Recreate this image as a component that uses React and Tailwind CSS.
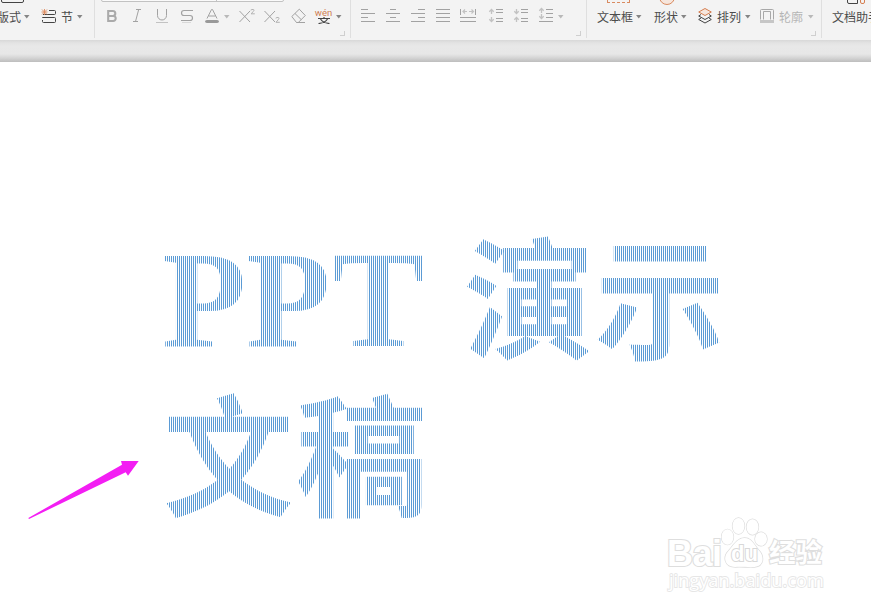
import React from 'react'

const Caret = ({ className = '', light }) => (
  <svg className={`shrink-0 ${className}`} width="6" height="17" viewBox="0 0 6 17">
    <path d="M0 7h5.500L2.750 10.400z" fill={light ? '#b9b9b9' : '#858585'} />
  </svg>
)

const Icon = ({ w, className = '', children, color = '#a2a2a2' }) => (
  <svg
    className={`shrink-0 overflow-visible ${className}`}
    width={w}
    height="17"
    viewBox={`0 0 ${w} 17`}
    fill="none"
    stroke={color}
  >
    {children}
  </svg>
)

const Label = ({ children, className = '' }) => (
  <span className={`shrink-0 whitespace-nowrap text-[12px] leading-[18px] ${className}`}>{children}</span>
)

const Launcher = () => (
  <span className="mr-[5px] mb-[4px] h-[5px] w-[5px] self-end border-r border-b border-[#cfcfcf]" />
)

const Group = ({ className, top, launcher, children }) => (
  <div className={`flex h-10 shrink-0 flex-col ${className}`}>
    <div className="flex h-2 items-start overflow-hidden">{top}</div>
    <div className="flex h-[17px] items-start">{children}</div>
    <div className="flex flex-1 flex-col justify-end">{launcher && <Launcher />}</div>
  </div>
)

const Separator = () => <div className="h-[38px] w-px shrink-0 bg-[#dfdfdf]" />

// lines of a paragraph icon: [x1, x2] for each of the four rows
const AlignIcon = ({ rows, className }) => (
  <Icon w={14} className={className}>
    {rows.map(([a, b], i) => (
      <path key={i} d={`M${a} ${1.5 + i * 4}H${b}`} />
    ))}
  </Icon>
)

const UpArrow = ({ y }) => <path d={`M2.5 ${y + 5}V${y + 0.5}M.3 ${y + 2.7}L2.5 ${y + 0.5}l2.2 2.2`} stroke="#c2c2c2" strokeWidth="1.3" />
const DownArrow = ({ y }) => <path d={`M2.5 ${y}v4.5M.3 ${y + 2.3}L2.5 ${y + 4.5}l2.2-2.2`} stroke="#c2c2c2" strokeWidth="1.3" />

const Toolbar = () => (
  <div className="flex h-10 overflow-hidden bg-[#f3f3f3] text-[#4c4c4c]">
    <Group
      className="w-[94px]"
      top={<div className="-mt-1 ml-px h-[7px] w-[23px] rounded-b-[2px] border border-[#444]" />}
    >
      <Label className="-ml-[3px]">版式</Label>
      <Caret className="ml-[3px]" />
      <Icon w={15} className="ml-[11px]" color="#444">
        <path d="M8 2.500h5.500q1 0 1 1v2q0 1-1 1H8M1.500 10v-.5h12q1 0 1 1v3q0 1-1 1h-11q-1 0-1-1V12M8 6.500H2" />
        <path d="M3.500 1v6M.5 4h6M1 1.500l5 5M6 1.500l-5 5" stroke="#dc8a5e" strokeWidth=".9" />
      </Icon>
      <Label className="ml-[5px]">节</Label>
      <Caret className="ml-[4px]" />
    </Group>
    <Separator />

    <Group
      className="w-[255px]"
      launcher
      top={
        <div className="-mt-2 ml-[6px] flex h-[10px] w-[183px] rounded-[2px] border border-[#c2c2c2] bg-[#fafafa]">
          <div className="w-[115px] border-r border-[#c2c2c2]" />
        </div>
      }
    >
      <Icon w={10} className="ml-[12px]" color="#aaa">
        <path d="M1.200 3h4.600a2.400 2.400 0 0 1 0 5H1.200zM1.200 8h5a2.500 2.500 0 0 1 0 5h-5z" strokeWidth="2.100" />
      </Icon>
      <Icon w={8} className="ml-[16px]">
        <path d="M3 1.500h5M0 13.500h5M5.700 1.500l-3.200 12" />
      </Icon>
      <Icon w={12} className="ml-[15px]">
        <path d="M1.500 1v6.500a4.500 4.500 0 0 0 9 0V1" />
        <path d="M0 14.500h12" stroke="#c2c2c2" />
      </Icon>
      <Icon w={12} className="ml-[13px]">
        <path d="M12 2.500H3q-2.500 0-2.500 2.500T3 7.500h6q2.500 0 2.500 2.500T9 12.500H0" strokeWidth="1.200" />
        <path d="M1 14.500h9" stroke="#d9d9d9" />
      </Icon>
      <Icon w={14} className="ml-[12px]">
        <path d="M2 10.500L6.500 1.500h1l4.500 9M3.500 8h7" />
        <rect x=".5" y="12.500" width="13" height="2" rx="1" fill="#999" stroke="#999" />
      </Icon>
      <Caret className="ml-[5px]" light />
      <Icon w={16} className="ml-[9px]">
        <path d="M.5 3l10.500 11M11 3L.5 14" />
        <path d="M12 2.500V2q0-.5.700-.5h1.600q.7 0 .7.800T12 5.800h3.800" stroke="#b2b2b2" />
      </Icon>
      <Icon w={16} className="ml-[9px]">
        <path d="M.5 3L11 14M11 3L.5 14" />
        <path d="M12 10.500V10q0-.5.700-.5h1.600q.7 0 .7.800t-3 4h3.800" stroke="#b2b2b2" />
      </Icon>
      <Icon w={15} className="ml-[11px]">
        <path d="M.8 8.500L8.300 1.200l6 6.300-7 7H5.500zM4 5.500l6.300 6.200M5.500 14.500H14" />
      </Icon>
      <div className="ml-[8px] flex w-[19px] shrink-0 flex-col items-center">
        <span className="mt-[-3px] h-[12px] font-['Roboto',sans-serif] text-[9.500px] leading-[15px] text-[#cf7f54]">wén</span>
        <svg width="12" height="7" viewBox="0 0 12 7" fill="none" stroke="#444">
          <path d="M0 1.500h12M6 0v1.500M2.500 2Q5 6 11.500 6.500M9.500 2Q7 6 .5 6.500" strokeWidth="1.200" />
        </svg>
      </div>
      <Caret className="ml-[3px]" />
    </Group>
    <Separator />

    <Group className="w-[235px]" launcher>
      <AlignIcon className="ml-[10px]" rows={[[0, 7], [0, 14], [0, 7], [0, 14]]} />
      <AlignIcon className="ml-[11px]" rows={[[4, 10], [0, 14], [4, 10], [0, 14]]} />
      <AlignIcon className="ml-[11px]" rows={[[7, 14], [0, 14], [7, 14], [0, 14]]} />
      <AlignIcon className="ml-[11px]" rows={[[0, 14], [0, 14], [0, 14], [0, 14]]} />
      <Icon w={16} className="ml-[10px]">
        <path d="M.5 1v6M15.500 1v6M0 9.500h16M0 13.500h16" />
        <path d="M2.500 3.500H7M5 1.500l-2 2 2 2M9 3.500h4.500M11.500 1.500l2 2-2 2" stroke="#c2c2c2" strokeWidth="1.200" />
      </Icon>
      <Icon w={14} className="ml-[13px]">
        <UpArrow y={1} />
        <DownArrow y={9} />
        <path d="M7 1.500h7M7 4.500h7M7 10.500h7M7 13.500h7" />
      </Icon>
      <Icon w={14} className="ml-[11px]">
        <DownArrow y={1} />
        <UpArrow y={9} />
        <path d="M7 1.500h7M7 4.500h7M7 10.500h7M7 13.500h7" />
      </Icon>
      <Icon w={14} className="ml-[11px]">
        <UpArrow y={0} />
        <DownArrow y={6} />
        <path d="M7 1.500h7M7 5.500h7M7 9.500h7M0 13.500h14" />
      </Icon>
      <Caret className="ml-[5px]" light />
    </Group>
    <Separator />

    <Group
      className="w-[234px]"
      launcher
      top={
        <>
          <div className="-mt-2 ml-[20px] h-[11px] w-[23px] border border-dashed border-[#d98b60]" />
          <div className="-mt-[11px] ml-[29px] h-[16px] w-[16px] shrink-0 rounded-full border border-[#d98b60] bg-[#f6e6dd]" />
        </>
      }
    >
      <Label className="ml-[10px]">文本框</Label>
      <Caret className="ml-[3px]" />
      <Label className="ml-[12px]">形状</Label>
      <Caret className="ml-[3px]" />
      <Icon w={14} className="ml-[11px]" color="#444">
        <path d="M3 10L.7 11.500 7 15l6.300-3.500L11 10M3 6.500L.7 8 7 11.500 13.300 8 11 6.500" />
        <path d="M7 .5l6.300 3.500L7 7.500.7 4z" stroke="#d57e50" fill="#f6e6dd" />
      </Icon>
      <Label className="ml-[5px]">排列</Label>
      <Caret className="ml-[4px]" />
      <Icon w={14} className="ml-[9px]" color="#a8a8a8">
        <path d="M.5 11.500v-9q0-1 1-1h11q1 0 1 1v9M3.500 11.500v-8h7v8" />
        <path d="M0 13.500h14" stroke="#c6c6c6" strokeWidth="3" />
      </Icon>
      <Label className="ml-[5px] text-[#b5b5b5]">轮廓</Label>
      <Caret className="ml-[5px]" light />
    </Group>
    <Separator />

    <Group
      className="w-[60px]"
      top={
        <>
          <div className="-mt-1 ml-[25px] h-[8px] w-[11px] rounded-bl-[2px] border border-[#444]" />
          <div className="-mt-1 ml-[2px] h-[8px] w-[5px] rounded-b-[2px] border border-[#d57e50]" />
        </>
      }
    >
      <Label className="ml-[10px]">文档助手</Label>
    </Group>
  </div>
)

const STRIPES =
  'bg-[linear-gradient(90deg,transparent_1px,#5b9bd5_1px)] bg-[length:2px_100%] bg-clip-text text-transparent'

const Slide = () => (
  <div className="relative h-[549px] overflow-hidden bg-white">
    <div
      className={`ml-[162px] w-[600px] pt-[159px] font-['Liberation_Serif',serif] text-[138px] font-bold leading-[157px] ${STRIPES}`}
    >
      <div className="h-[157px] whitespace-pre">
        P<span className="tracking-[2px]">P</span>T{' '}
        <span className="ml-[7px] align-[-3px] font-['Noto_Sans_CJK_SC',sans-serif] text-[131px] leading-[100px]">演示</span>
      </div>
      <div className="h-[157px] whitespace-pre">
        <span className="ml-[1px] align-[-3px] font-['Noto_Sans_CJK_SC',sans-serif] text-[131px] leading-[100px] tracking-[2px]">文稿</span>
      </div>
    </div>

    <svg className="absolute top-[397px] left-[27px]" width="113" height="62" viewBox="0 0 113 62">
      <path d="M1.300 59L95 5.700 94 2h17.700L101 16.700l-2.300-3.400L2 60z" fill="#f31ef3" />
    </svg>

    <div className="absolute top-[453px] left-[667px] text-white [paint-order:stroke_fill]">
      <div className="flex h-[54px] items-start font-['Liberation_Sans','Noto_Sans_CJK_SC',sans-serif] font-bold [-webkit-text-stroke:2.2px_#dedede]">
        <span className="mt-[19px] w-[54px] text-[36px] leading-[40px] tracking-[-0.5px]">Bai</span>
        <div className="relative">
          <svg width="48" height="53" viewBox="0 0 48 53" fill="#fff" stroke="#dcdcdc" strokeWidth="1.300">
            <ellipse cx="6.500" cy="22" rx="6" ry="7.700" />
            <ellipse cx="17.500" cy="11" rx="6" ry="8" />
            <ellipse cx="31.500" cy="12" rx="6" ry="7.800" />
            <ellipse cx="40" cy="24" rx="6" ry="6.800" />
            <path d="M23.500 23c7 0 9 6 14 12 6 6 6 16-4 17-5 .5-14-.5-19 0-11 0-13-10-7-16 5-6 9-13 16-13z" />
          </svg>
          <span className="absolute top-[27px] left-[10px] text-[22px] leading-[24px] [-webkit-text-stroke:2px_#d8d8d8]">
            du
          </span>
        </div>
        <span className="mt-[21px] text-[26.500px] leading-[34px]">经验</span>
      </div>
      <div className="ml-[2px] font-['Open_Sans',sans-serif] text-[18.200px] leading-[22px] [-webkit-text-stroke:1.8px_#e6e6e6]">
        jingyan.baidu.com
      </div>
    </div>
  </div>
)

const App = () => (
  <div className="h-[611px] w-[871px] overflow-hidden bg-white font-['Noto_Sans_CJK_SC',sans-serif]">
    <Toolbar />
    <div className="h-[22px] bg-[linear-gradient(180deg,#d8d8d8_0px,#e3e3e3_3px,#e8e8e8_6px,#e7e7e7_14px,#d4d4d4_18px,#bdbdbd_22px)]" />
    <Slide />
  </div>
)

export default App
